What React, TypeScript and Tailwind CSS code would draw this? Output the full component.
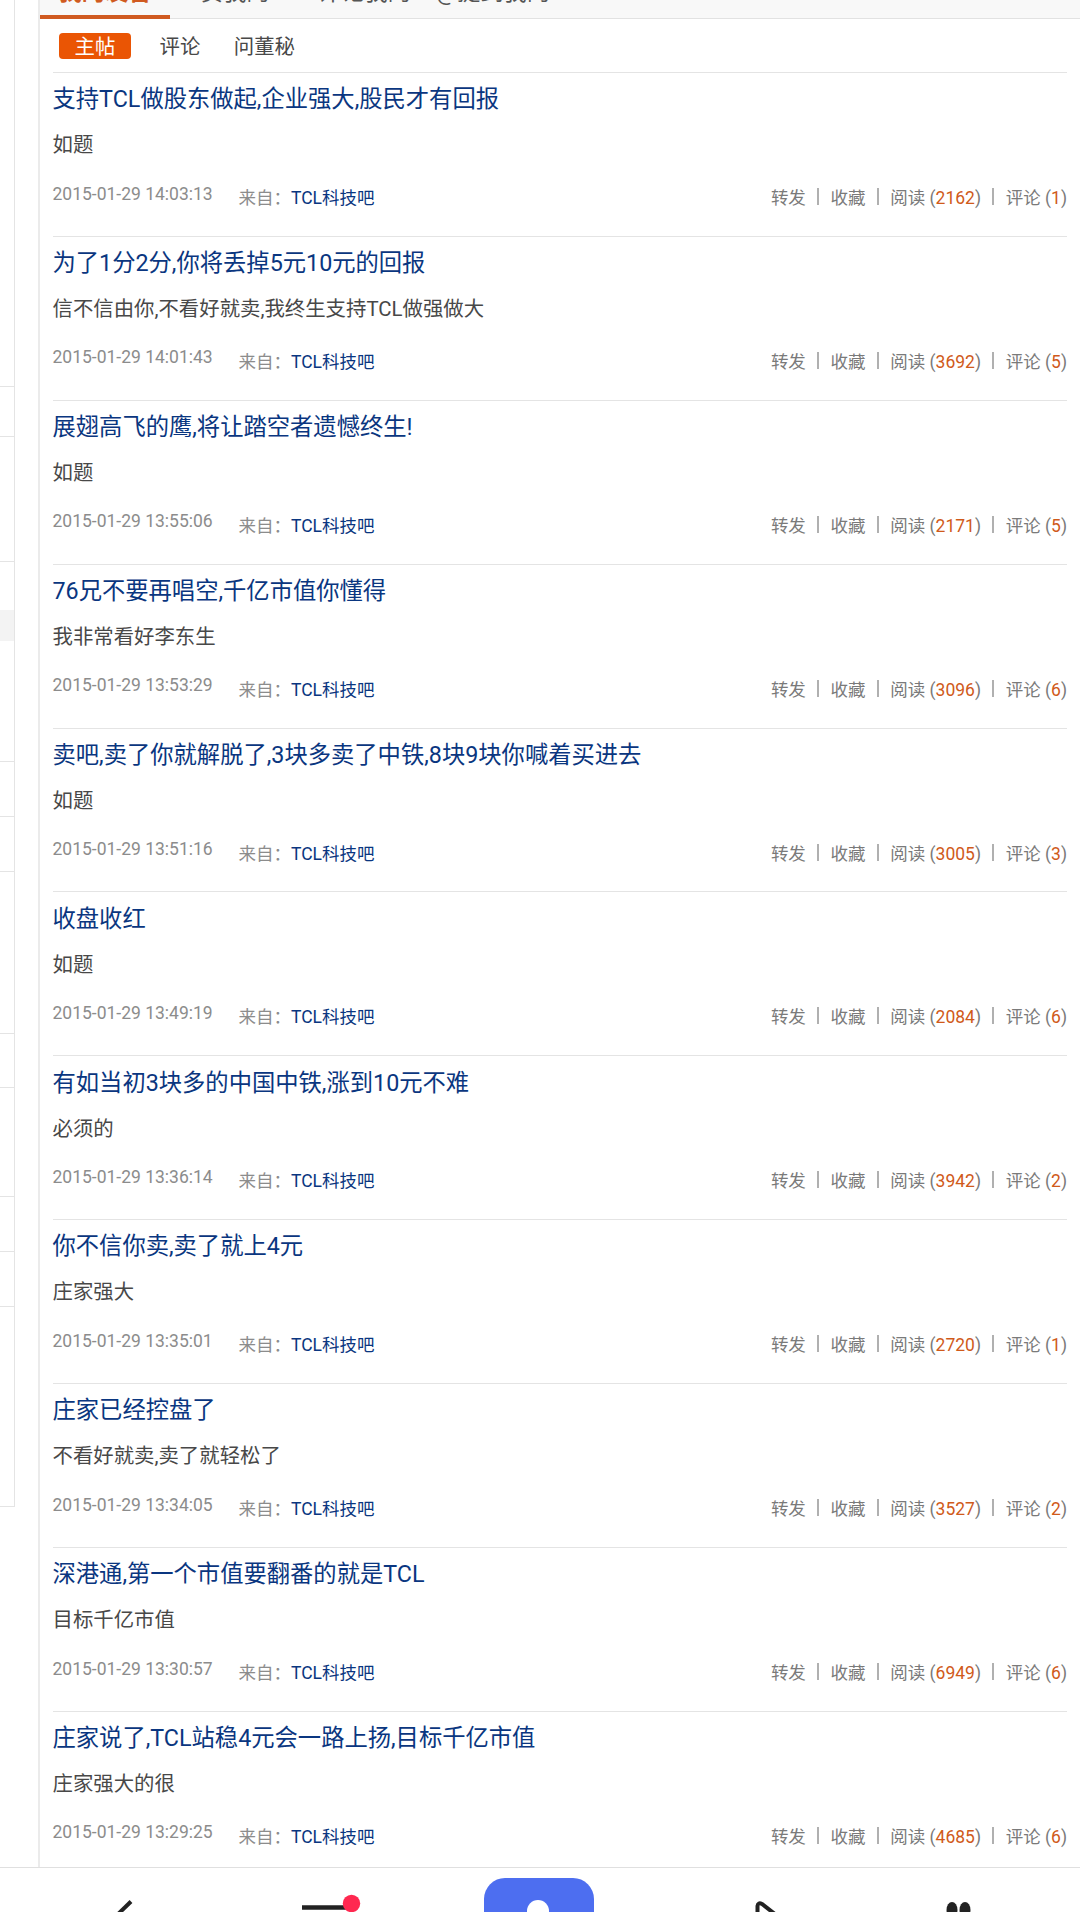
type Post = { title: string; body: string; time: string; reads: number; comments: number };

const POSTS: Post[] = [
  { title: '支持TCL做股东做起,企业强大,股民才有回报', body: '如题', time: '14:03:13', reads: 2162, comments: 1 },
  { title: '为了1分2分,你将丢掉5元10元的回报', body: '信不信由你,不看好就卖,我终生支持TCL做强做大', time: '14:01:43', reads: 3692, comments: 5 },
  { title: '展翅高飞的鹰,将让踏空者遗憾终生!', body: '如题', time: '13:55:06', reads: 2171, comments: 5 },
  { title: '76兄不要再唱空,千亿市值你懂得', body: '我非常看好李东生', time: '13:53:29', reads: 3096, comments: 6 },
  { title: '卖吧,卖了你就解脱了,3块多卖了中铁,8块9块你喊着买进去', body: '如题', time: '13:51:16', reads: 3005, comments: 3 },
  { title: '收盘收红', body: '如题', time: '13:49:19', reads: 2084, comments: 6 },
  { title: '有如当初3块多的中国中铁,涨到10元不难', body: '必须的', time: '13:36:14', reads: 3942, comments: 2 },
  { title: '你不信你卖,卖了就上4元', body: '庄家强大', time: '13:35:01', reads: 2720, comments: 1 },
  { title: '庄家已经控盘了', body: '不看好就卖,卖了就轻松了', time: '13:34:05', reads: 3527, comments: 2 },
  { title: '深港通,第一个市值要翻番的就是TCL', body: '目标千亿市值', time: '13:30:57', reads: 6949, comments: 6 },
  { title: '庄家说了,TCL站稳4元会一路上扬,目标千亿市值', body: '庄家强大的很', time: '13:29:25', reads: 4685, comments: 6 },
];

// heights of the side column's cells, top to bottom
const SIDE_CELLS = [387, 50, 125, 200, 55, 55, 162, 54, 109, 55, 55, 200];

function Sidebar() {
  return (
    <aside className="h-[1507px] w-[15px] shrink-0 border-r-[1.5px] border-[#e4e4e4]">
      {SIDE_CELLS.map((h, i) => (
        <div key={i} className="border-b border-[#e4e4e4]" style={{ height: h }}>
          {i === 3 && (
            <div className="pt-[48px]">
              <div className="h-[31px] bg-[#f3f3f3]" />
            </div>
          )}
        </div>
      ))}
    </aside>
  );
}

function Separator() {
  return <span className="-mt-[3px] ml-[11px] mr-[11.7px] h-[17px] border-l-2 border-[#b0b0b0]" />;
}

function PostRow({ post }: { post: Post }) {
  return (
    <article className="h-[163.9px] whitespace-nowrap border-b-[1.5px] border-[#e4e4e4]">
      <h2 className="h-[53px] pt-[9.2px] text-[23.3px] leading-[35px] text-[#0a3680]">{post.title}</h2>
      <p className="h-[52px] pt-[4.2px] text-[20.4px] leading-[30px] text-[#484848]">{post.body}</p>
      <div className="flex h-[40px] items-center text-[17.5px] leading-[26px] text-[#8c8c8c]">
        <span className="-mt-[9px] w-[186px]">2015-01-29 {post.time}</span>
        <span>来自：</span>
        <span className="text-[#0a3680]">TCL科技吧</span>
        <div className="ml-auto flex items-center text-[#7a7a7a]">
          <span>转发</span>
          <Separator />
          <span>收藏</span>
          <Separator />
          <span>
            阅读 (<b className="font-normal text-[#d05a1a]">{post.reads}</b>)
          </span>
          <Separator />
          <span>
            评论 (<b className="font-normal text-[#d05a1a]">{post.comments}</b>)
          </span>
        </div>
      </div>
    </article>
  );
}

function BottomNav() {
  return (
    <nav className="h-[45px] w-full shrink-0 border-t border-[#e0e0e0] bg-white">
      <svg width="1080" height="44" viewBox="0 1868 1080 44">
        <path d="M131 1901.5 L112 1920" fill="none" stroke="#222" strokeWidth="4" />
        <path d="M302 1907.5 H348" stroke="#222" strokeWidth="4.5" />
        <circle cx="351.5" cy="1903.5" r="8.7" fill="#ff2850" />
        <rect x="484" y="1878" width="110" height="80" rx="21" fill="#4d6ef0" />
        <circle cx="538" cy="1911" r="11" fill="#fff" />
        <path d="M757.5 1920 V1906 Q758 1902 762 1904 L780 1918" fill="none" stroke="#222" strokeWidth="4" />
        <ellipse cx="952" cy="1910" rx="5.5" ry="8" fill="#222" />
        <ellipse cx="965" cy="1910" rx="5.5" ry="8" fill="#222" />
      </svg>
    </nav>
  );
}

export default function App() {
  return (
    <div className="flex h-[1912px] w-[1080px] flex-col overflow-hidden bg-white font-[Roboto,'Noto_Sans_CJK_SC',sans-serif]">
      <div className="flex h-[1867px] overflow-hidden">
        <Sidebar />
        <main className="ml-[23px] flex min-w-0 flex-1 flex-col border-l-2 border-[#ebebeb]">
          <header className="flex h-[19px] shrink-0 items-end whitespace-nowrap border-b border-[#e2e2e2] bg-[#f8f8f8] text-[23.3px] leading-[30px] text-[#555]">
            <span className="-mb-px w-[130px] border-b-4 border-[#d05a20] pb-[8px] text-center font-bold text-[#d05a20]">
              我的发言
            </span>
            <span className="ml-[30px] pb-[11px]">赞我的</span>
            <span className="ml-[48px] pb-[11px]">评论我的</span>
            <span className="ml-[25px] pb-[11px]">@提到我的</span>
          </header>
          <div className="mx-[13px] flex h-[54px] shrink-0 items-center border-b-[1.5px] border-[#e4e4e4] text-[20.4px] leading-[28px] text-[#484848]">
            <span className="ml-[6px] h-[26px] w-[72px] rounded bg-[#ea5504] text-center text-white">主帖</span>
            <span className="ml-[28.5px] pt-[2px]">评论</span>
            <span className="ml-[33.5px] pt-[2px]">问董秘</span>
          </div>
          <section className="ml-[12.5px] mr-[13px]">
            {POSTS.map((post) => (
              <PostRow key={post.time} post={post} />
            ))}
          </section>
        </main>
      </div>
      <BottomNav />
    </div>
  );
}
